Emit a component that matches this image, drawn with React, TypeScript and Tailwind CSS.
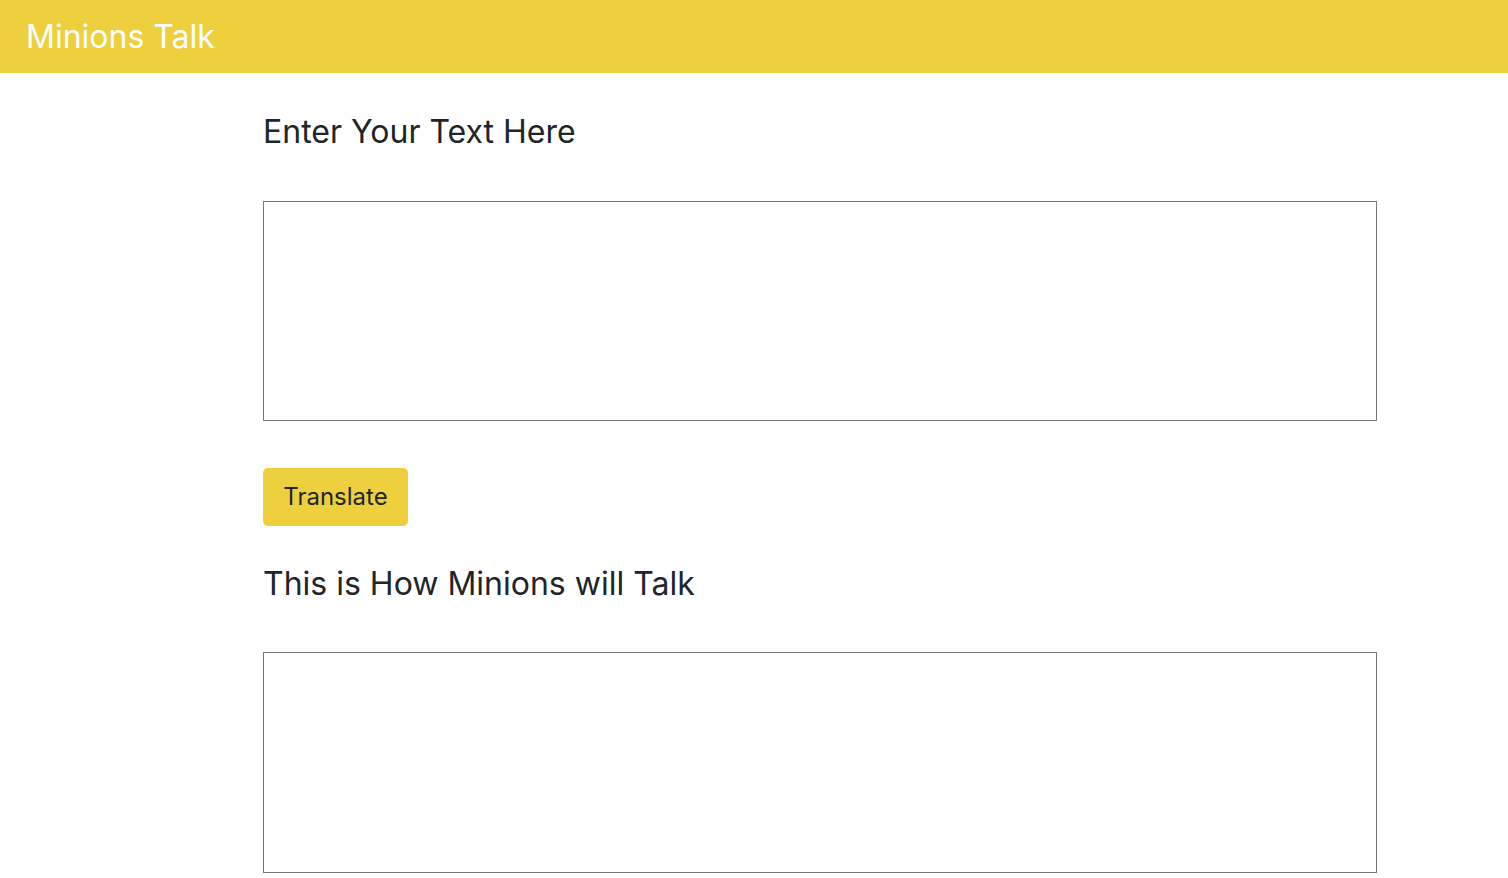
import React, { useState } from "react";

export default function App() {
    const [text, setText] = useState("");
    const [output, setOutput] = useState("");

    return (
        <div className="min-h-screen bg-white font-['Inter',sans-serif] text-[#212529]">
            <header className="h-[73px] bg-[#eecf3d] flex items-center px-[26px]">
                <h1 className="text-[32px] leading-none text-white">Minions Talk</h1>
            </header>

            <main className="pl-[263px] pt-[40px]">
                <h2 className="text-[32px] leading-[38px]">Enter Your Text Here</h2>
                <textarea
                    value={text}
                    onChange={(e) => setText(e.target.value)}
                    className="block mt-[50px] w-[1114px] h-[220px] border border-[#767676] outline-none resize-none p-2"
                />
                <button
                    onClick={() => setOutput(text)}
                    className="mt-[47px] w-[145px] h-[58px] rounded-[5px] bg-[#eecf3d] text-[24px] text-[#212529]"
                >
                    Translate
                </button>
                <h2 className="mt-[39px] text-[32px] leading-[38px]">This is How Minions will Talk</h2>
                <textarea
                    value={output}
                    readOnly
                    className="block mt-[49px] w-[1114px] h-[221px] border border-[#767676] outline-none resize-none p-2"
                />
            </main>
        </div>
    );
}
